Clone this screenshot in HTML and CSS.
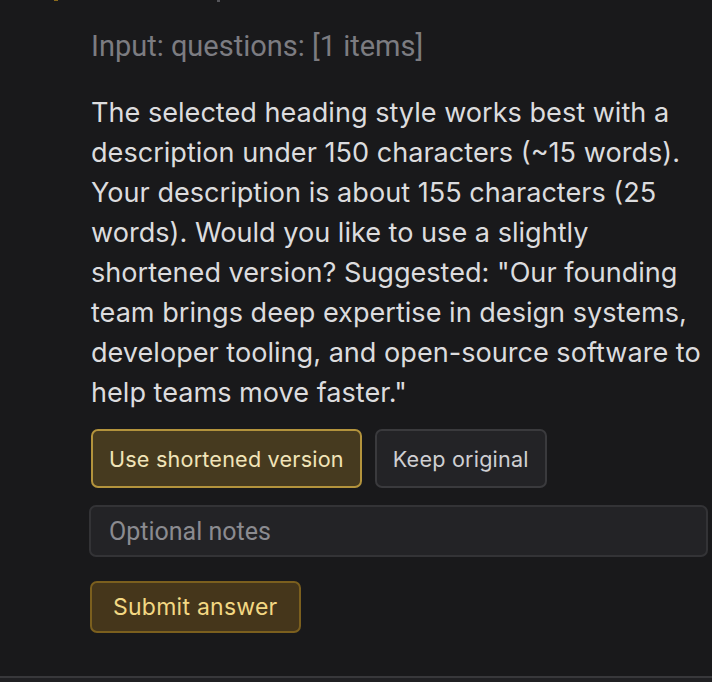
FILE: index.html
```html
<!DOCTYPE html>
<html>
<head>
<meta charset="utf-8">
<link rel="stylesheet" href="styles.css">
</head>
<body>
<div class="top-edge">
  <span class="dot-gold"></span>
  <span class="dot-gray"></span>
</div>
<main class="panel">
  <div class="input-label">Input: questions: [1 items]</div>
  <p class="question">The selected heading style works best with a description under 150 characters (~15 words). Your description is about 155 characters (25 words). Would you like to use a slightly shortened version? Suggested: "Our founding team brings deep expertise in design systems, developer tooling, and open-source software to help teams move faster."</p>
  <div class="options">
    <button class="opt opt-selected">Use shortened version</button>
    <button class="opt">Keep original</button>
  </div>
  <input class="notes" type="text" placeholder="Optional notes">
  <button class="submit">Submit answer</button>
</main>
<div class="footer-line"></div>
</body>
</html>
```
FILE: styles.css
```css
html, body {
  margin: 0;
  padding: 0;
  background: #19191b;
  height: 682px;
  overflow: hidden;
}
body {
  font-family: Inter, "Noto Sans", sans-serif;
  position: relative;
}
.top-edge {
  position: absolute;
  top: 0;
  left: 0;
  right: 0;
  height: 2px;
}
.dot-gold {
  position: absolute;
  left: 54px;
  top: 0;
  width: 4px;
  height: 1px;
  background: #8a6a1c;
}
.dot-gray {
  position: absolute;
  left: 217px;
  top: 0;
  width: 3px;
  height: 2px;
  background: #55555a;
}
.panel {
  padding: 28px 2px 0 91px;
  display: flex;
  flex-direction: column;
  align-items: flex-start;
  height: 647px;
  box-sizing: border-box;
}
.input-label {
  font-family: Roboto, "Liberation Sans", sans-serif;
  font-size: 29px;
  line-height: 36px;
  color: #7c7c81;
}
.question {
  margin: 29px 0 16px 0;
  font-size: 27.1px;
  line-height: 40px;
  color: #dcdcde;
}
.options {
  display: flex;
  gap: 13px;
}
.opt {
  font-family: Inter, "Noto Sans", sans-serif;
  height: 59px;
  padding: 0 16px;
  border-radius: 7px;
  border: 2px solid #3a3a3d;
  background: #232326;
  color: #cfcfd2;
  font-size: 21.6px;
  letter-spacing: 0.2px;
}
.opt-selected {
  border-color: #b3933c;
  background: #463a1f;
  color: #f1e4b8;
}
.notes {
  margin-top: 17px;
  width: 619px;
  height: 52px;
  box-sizing: border-box;
  margin-left: -2px;
  padding: 0 18px;
  background: #232326;
  border: 2px solid #333336;
  border-radius: 7px;
  font-family: Roboto, "Liberation Sans", sans-serif;
  font-size: 25px;
  color: #dcdcde;
  outline: none;
}
.notes::placeholder {
  color: #8b8b90;
}
.submit {
  margin-top: 24px;
  margin-left: -1px;
  height: 52px;
  padding: 0 21px;
  border-radius: 7px;
  border: 2px solid #7b5f1e;
  background: #45361b;
  color: #f3d883;
  font-family: Inter, "Noto Sans", sans-serif;
  font-size: 23px;
  letter-spacing: 0.25px;
}
.footer-line {
  position: absolute;
  left: 0;
  right: 0;
  top: 676px;
  height: 6px;
  border-top: 2px solid #38383b;
  background: #202023;
  box-sizing: border-box;
}
```
